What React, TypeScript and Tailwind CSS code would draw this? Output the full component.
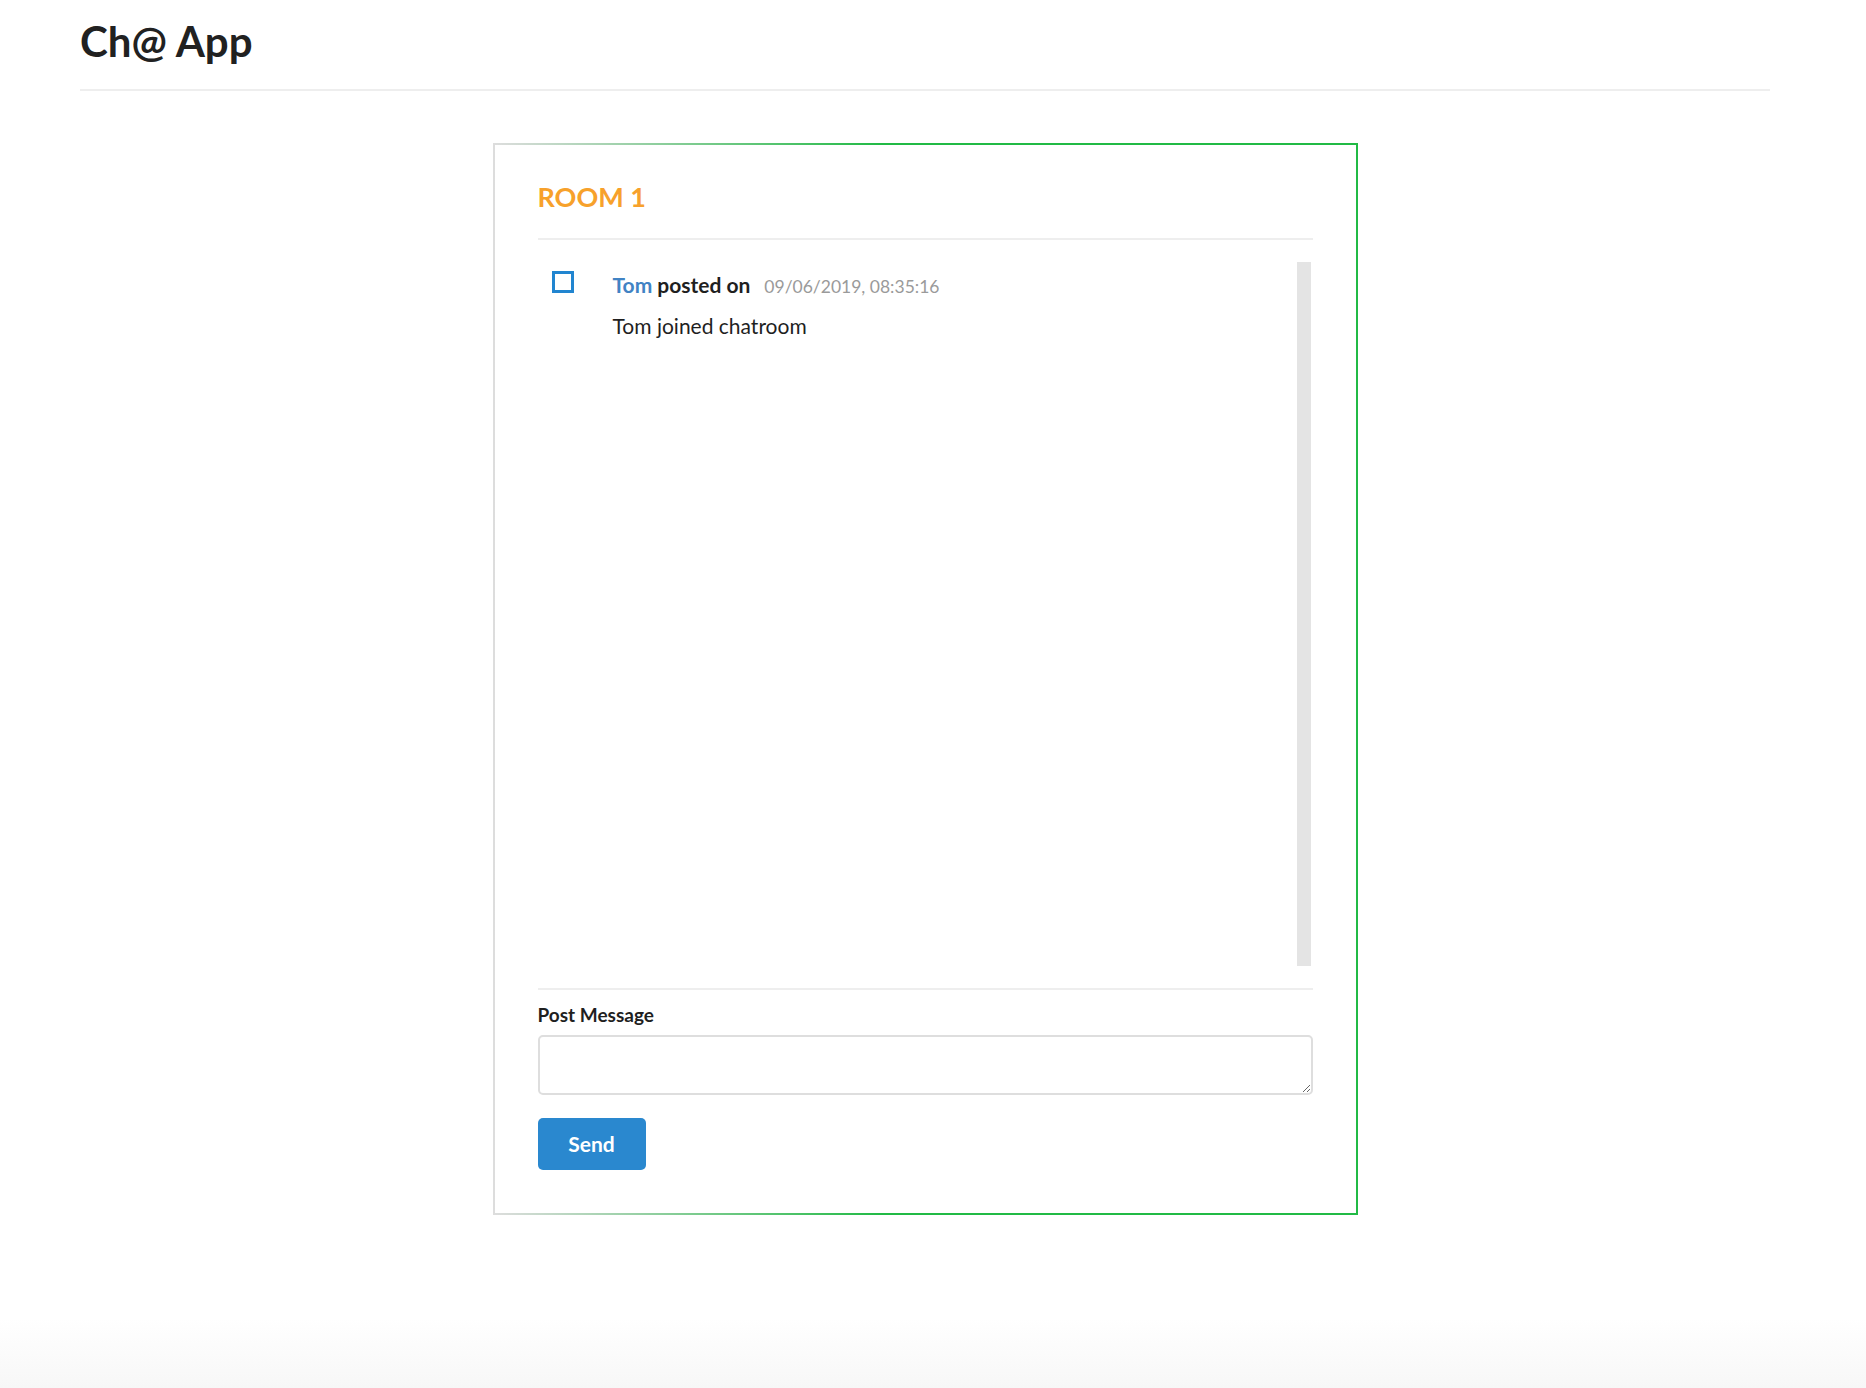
import { useState } from "react";

type Message = {
  id: number;
  author: string;
  postedAt: string;
  text: string;
};

const messages: Message[] = [
  { id: 1, author: "Tom", postedAt: "09/06/2019, 08:35:16", text: "Tom joined chatroom" },
];

const MessageItem = ({ message }: { message: Message }) => (
  <div className="flex pt-[9px]">
    <div className="ml-[14px] mr-[39px] h-[22px] w-[22px] shrink-0 border-[3px] border-[#2185d0]" />
    <div className="pt-[2px]">
      <div className="flex items-baseline text-[21px] leading-[24px]">
        <span className="font-bold text-[#4183c4]">{message.author}</span>
        <span className="ml-[5px] font-bold text-[#1f1f1f]">posted on</span>
        <span className="ml-[14px] text-[17.5px] text-[#9a9a9a]">{message.postedAt}</span>
      </div>
      <div className="mt-[15px] text-[21px] leading-[24px] text-[#1f1f1f]">
        {message.text}
      </div>
    </div>
  </div>
);

export default function App() {
  const [draft, setDraft] = useState("");

  return (
    <div className="min-h-screen bg-[linear-gradient(180deg,#ffffff_95%,#f7f7f7_100%)] font-['Lato',sans-serif] text-[#1f1f1f]">
      <div className="ml-[80px] mr-[96px] pt-[17px]">
        <h1 className="text-[42px] font-bold leading-[48px] text-[#212121]">Ch@ App</h1>
        <div className="mt-[24px] h-[2px] bg-[#eeeeee]" />

        <div className="mx-auto mt-[52px] w-[865px] border-2 border-solid px-[43px] pb-[43px] pt-[35px] [border-image:linear-gradient(to_right,#dddddd,#21ba45_45%,#21ba45)_1]">
          <h2 className="text-[27px] font-bold leading-[34px] text-[#f7a12b]">ROOM 1</h2>
          <div className="mt-[24px] h-[2px] bg-[#eeeeee]" />

          <div className="mt-[22px] flex h-[704px]">
            <div className="flex-1">
              {messages.map((m) => (
                <MessageItem key={m.id} message={m} />
              ))}
            </div>
            <div className="mr-[2px] w-[14px] bg-[#e4e4e4]" />
          </div>

          <div className="mt-[22px] h-[2px] bg-[#eeeeee]" />

          <label className="mt-[13px] block text-[19px] font-bold leading-[23px] text-[#1f1f1f]">
            Post Message
          </label>
          <textarea
            className="mt-[9px] block h-[60px] w-full rounded-[5px] border-2 border-[#dedede] px-3 py-2 text-[18px] outline-none"
            value={draft}
            onChange={(e) => setDraft(e.target.value)}
          />
          <button className="mt-[23px] h-[52px] w-[108px] rounded-[5px] bg-[#2a88cf] text-[21px] font-bold text-white">
            Send
          </button>
        </div>
      </div>
    </div>
  );
}
